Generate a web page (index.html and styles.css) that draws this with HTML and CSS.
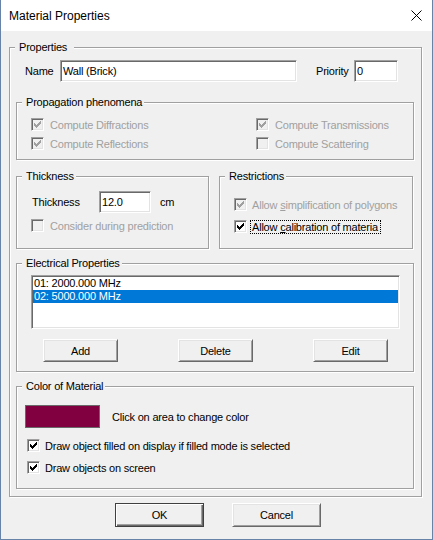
FILE: index.html
```html
<!DOCTYPE html>
<html>
<head>
<meta charset="utf-8">
<title>Material Properties</title>
<link rel="stylesheet" href="styles.css">
</head>
<body>
<div class="window">
  <div class="titlebar">
    <span class="title">Material Properties</span>
    <svg class="close" width="11" height="11" viewBox="0 0 11 11"><path d="M0.5 0.5L10.5 10.5M10.5 0.5L0.5 10.5" stroke="#000" stroke-width="1" fill="none"/></svg>
  </div>
  <div class="client">
    <div class="group outer">
      <div class="legend">Properties</div>
      <div class="name-row">
        <span class="name-lbl">Name</span>
        <div class="edit name-edit">Wall (Brick)</div>
        <span class="prio-lbl">Priority</span>
        <div class="edit prio-edit">0</div>
      </div>

      <div class="group prop">
        <div class="legend">Propagation phenomena</div>
        <div class="chk-grid">
          <div class="chk disabled"><span class="box"><svg width="7" height="7" viewBox="0 0 7 7"><path d="M0 2h1v3H0zM1 3h1v3H1zM2 4h1v3H2zM3 3h1v3H3zM4 2h1v3H4zM5 1h1v3H5zM6 0h1v3H6z"/></svg></span>Compute Diffractions</div>
          <div class="chk disabled"><span class="box"><svg width="7" height="7" viewBox="0 0 7 7"><path d="M0 2h1v3H0zM1 3h1v3H1zM2 4h1v3H2zM3 3h1v3H3zM4 2h1v3H4zM5 1h1v3H5zM6 0h1v3H6z"/></svg></span>Compute Transmissions</div>
          <div class="chk disabled"><span class="box"><svg width="7" height="7" viewBox="0 0 7 7"><path d="M0 2h1v3H0zM1 3h1v3H1zM2 4h1v3H2zM3 3h1v3H3zM4 2h1v3H4zM5 1h1v3H5zM6 0h1v3H6z"/></svg></span>Compute Reflections</div>
          <div class="chk disabled"><span class="box"></span>Compute Scattering</div>
        </div>
      </div>

      <div class="pair">
        <div class="group thick">
          <div class="legend">Thickness</div>
          <div class="thick-row">
            <span class="thick-lbl">Thickness</span>
            <div class="edit thick-edit">12.0</div>
            <span class="unit">cm</span>
          </div>
          <div class="chk disabled consider"><span class="box"></span>Consider during prediction</div>
        </div>
        <div class="group restr">
          <div class="legend">Restrictions</div>
          <div class="rows">
            <div class="chk disabled"><span class="box"><svg width="7" height="7" viewBox="0 0 7 7"><path d="M0 2h1v3H0zM1 3h1v3H1zM2 4h1v3H2zM3 3h1v3H3zM4 2h1v3H4zM5 1h1v3H5zM6 0h1v3H6z"/></svg></span><span class="pad">Allow <u>s</u>implification of polygons</span></div>
            <div class="chk"><span class="box"><svg width="7" height="7" viewBox="0 0 7 7"><path d="M0 2h1v3H0zM1 3h1v3H1zM2 4h1v3H2zM3 3h1v3H3zM4 2h1v3H4zM5 1h1v3H5zM6 0h1v3H6z"/></svg></span><span class="focus">Allow <u>c</u>alibration of materia</span></div>
          </div>
        </div>
      </div>

      <div class="group elec">
        <div class="legend">Electrical Properties</div>
        <div class="listbox">
          <div class="item">01: 2000.000 MHz</div>
          <div class="item selected">02: 5000.000 MHz</div>
        </div>
        <div class="btn-row">
          <button class="btn">Add</button>
          <button class="btn">Delete</button>
          <button class="btn">Edit</button>
        </div>
      </div>

      <div class="group color">
        <div class="legend">Color of Material</div>
        <div class="swatch-row">
          <div class="swatch"></div>
          <span class="swatch-lbl">Click on area to change color</span>
        </div>
        <div class="rows">
          <div class="chk"><span class="box"><svg width="7" height="7" viewBox="0 0 7 7"><path d="M0 2h1v3H0zM1 3h1v3H1zM2 4h1v3H2zM3 3h1v3H3zM4 2h1v3H4zM5 1h1v3H5zM6 0h1v3H6z"/></svg></span>Draw object filled on display if filled mode is selected</div>
          <div class="chk"><span class="box"><svg width="7" height="7" viewBox="0 0 7 7"><path d="M0 2h1v3H0zM1 3h1v3H1zM2 4h1v3H2zM3 3h1v3H3zM4 2h1v3H4zM5 1h1v3H5zM6 0h1v3H6z"/></svg></span>Draw objects on screen</div>
        </div>
      </div>
    </div>

    <div class="dlg-btns">
      <button class="btn btn-dlg default">OK</button>
      <button class="btn btn-dlg">Cancel</button>
    </div>
  </div>
</div>
</body>
</html>
```

FILE: styles.css
```css
html, body {
  margin: 0;
  padding: 0;
  background: #f0f0f0;
}

.window {
  width: 433px;
  height: 540px;
  box-sizing: border-box;
  border: 1px solid #6783a7;
  border-top: none;
  background: #f0f0f0;
  display: flex;
  flex-direction: column;
  font-family: "Liberation Sans", Arial, sans-serif;
  font-size: 11px;
  letter-spacing: -0.2px;
  color: #000;
}

.titlebar {
  height: 31px;
  flex: none;
  background: #fff;
  display: flex;
  align-items: center;
  padding-left: 8px;
}

.title {
  font-size: 12px;
  letter-spacing: 0;
}

.close {
  margin-left: auto;
  margin-right: 10px;
  display: block;
}

.client {
  flex: 1;
  display: flex;
  flex-direction: column;
}

.group {
  border: 1px solid #a0a0a0;
  box-shadow: 1px 1px 0 #fff, inset 1px 1px 0 #fff;
  box-sizing: border-box;
}

.legend {
  width: fit-content;
  height: 13px;
  line-height: 13px;
  margin: -7px 0 0 5px;
  padding: 0 2px 0 4px;
  background: #f0f0f0;
  white-space: nowrap;
}

.outer {
  margin: 16px 10px 0 8px;
  padding: 0 7px 7px 6px;
}

.outer > .legend {
  margin-left: -1px;
  padding: 0 7px 0 4px;
}

/* Name row */
.name-row {
  display: flex;
  align-items: center;
  height: 22px;
  margin-top: 6px;
}

.name-lbl {
  margin-left: 9px;
  width: 35px;
}

.prio-lbl {
  margin-left: 19px;
  width: 38px;
}

.edit {
  height: 22px;
  box-sizing: border-box;
  background: #fff;
  border: 1px solid;
  border-color: #a0a0a0 #fff #fff #a0a0a0;
  box-shadow: inset 1px 1px 0 #696969, inset -1px -1px 0 #e3e3e3;
  padding-left: 2px;
  line-height: 20px;
  white-space: nowrap;
}

.name-edit { width: 237px; }
.prio-edit { width: 44px; }

/* Checkboxes */
.chk {
  display: flex;
  align-items: center;
  gap: 6px;
  height: 19px;
  white-space: nowrap;
}

.chk.disabled {
  color: #a0a0a0;
}

.box {
  flex: none;
  width: 13px;
  height: 13px;
  box-sizing: border-box;
  border: 1px solid;
  border-color: #a0a0a0 #fff #fff #a0a0a0;
  box-shadow: inset 1px 1px 0 #696969, inset -1px -1px 0 #e3e3e3;
  background: #fff;
  padding: 2px 0 0 2px;
}

.box svg {
  display: block;
  fill: #000;
}

.disabled .box {
  background: #f0f0f0;
}

.disabled .box svg {
  fill: #a0a0a0;
}

/* Propagation */
.prop {
  margin-top: 20px;
  padding-bottom: 6px;
}

.chk-grid {
  display: grid;
  grid-template-columns: 225px 1fr;
  grid-auto-rows: 19px;
  margin-top: 6px;
  padding-left: 14px;
}

/* Thickness / Restrictions */
.pair {
  display: flex;
  gap: 10px;
  margin-top: 16px;
}

.pair .group {
  height: 73px;
}

.thick { width: 193px; }
.restr { width: 194px; }

.thick-row {
  display: flex;
  align-items: center;
  height: 22px;
  margin-top: 8px;
  padding-left: 15px;
}

.thick-lbl { width: 67px; }
.thick-edit { width: 52px; }
.unit { margin-left: 9px; }

.consider {
  margin-top: 3px;
  padding-left: 14px;
}

.restr .rows {
  margin-top: 12px;
  padding-left: 14px;
  display: flex;
  flex-direction: column;
  gap: 3px;
}

.restr .chk {
  gap: 3px;
}

.pad {
  padding-left: 2px;
}

.focus {
  box-sizing: border-box;
  width: 131px;
  height: 14px;
  line-height: 12px;
  border: 1px dotted #000;
  padding-left: 1px;
  overflow: hidden;
}

/* Electrical */
.elec {
  margin-top: 14px;
  padding-bottom: 9px;
}

.listbox {
  margin: 5px 13px 0 14px;
  height: 54px;
  box-sizing: border-box;
  background: #fff;
  border: 1px solid;
  border-color: #a0a0a0 #fff #fff #a0a0a0;
  box-shadow: inset 1px 1px 0 #696969, inset -1px -1px 0 #e3e3e3;
  padding: 1px;
}

.item {
  height: 13px;
  line-height: 13px;
  padding-left: 1px;
  white-space: nowrap;
}

.item.selected {
  background: #0078d7;
  color: #fff;
}

.btn-row {
  display: flex;
  gap: 60px;
  margin-top: 10px;
  padding-left: 26px;
}

.btn {
  font-family: "Liberation Sans", Arial, sans-serif;
  font-size: 11px;
  letter-spacing: -0.2px;
  color: #000;
  width: 75px;
  height: 23px;
  box-sizing: border-box;
  padding: 0;
  background: #f0f0f0;
  border: 1px solid;
  border-color: #fff #696969 #696969 #fff;
  box-shadow: inset 1px 1px 0 #e3e3e3, inset -1px -1px 0 #a0a0a0;
}

/* Color */
.color {
  margin-top: 14px;
  padding-bottom: 11px;
}

.swatch-row {
  display: flex;
  align-items: center;
  margin-top: 12px;
  padding-left: 8px;
}

.swatch {
  width: 75px;
  height: 23px;
  box-sizing: border-box;
  background: #800040;
  border: 1px solid #696969;
}

.swatch-lbl {
  margin-left: 12px;
}

.color .rows {
  margin-top: 8px;
  padding-left: 10px;
  display: flex;
  flex-direction: column;
  gap: 3px;
}

.color .chk {
  gap: 5px;
}

/* Dialog buttons */
.dlg-btns {
  display: flex;
  gap: 28px;
  margin: 6px 0 0 114px;
}

.btn-dlg {
  width: 89px;
  height: 24px;
}

.btn-dlg.default {
  border-color: #404040;
  box-shadow: inset 1px 1px 0 #fff, inset -1px -1px 0 #696969, inset -2px -2px 0 #a0a0a0;
}
```
